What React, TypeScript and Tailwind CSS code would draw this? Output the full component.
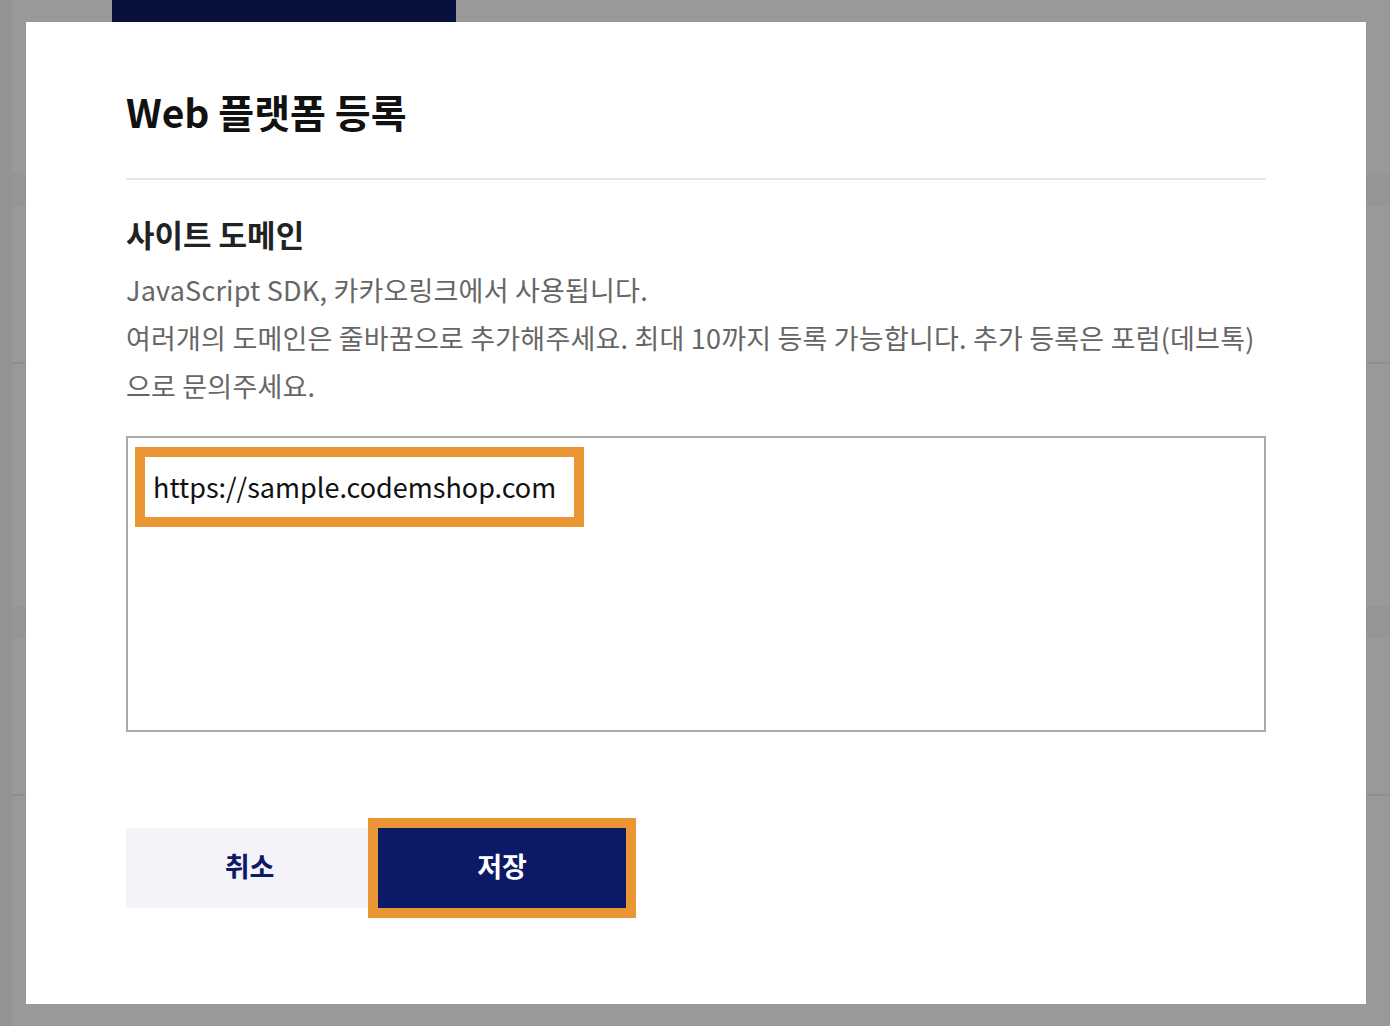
export default function App() {
  return (
    <div className="relative h-[1026px] w-[1390px] overflow-hidden bg-[#999999] font-['Noto_Sans_CJK_KR',sans-serif]">
      {/* page behind the dimmed overlay */}
      <div className="flex h-full">
        <div className="w-[12px] bg-[#939393]" />
        <div className="flex flex-1 flex-col">
          <div className="ml-[100px] h-[22px] w-[344px] bg-[#08103d]" />
          <div className="h-[151px]" />
          <div className="h-[33px] bg-[#959595]" />
          <div className="h-[156px]" />
          <div className="h-[2px] bg-[#8f8f8f]" />
          <div className="h-[242px]" />
          <div className="h-[32px] bg-[#959595]" />
          <div className="h-[156px]" />
          <div className="h-[2px] bg-[#8f8f8f]" />
        </div>
      </div>

      {/* modal */}
      <div className="absolute left-[26px] top-[22px] h-[982px] w-[1340px] bg-white px-[100px] pt-[67px]">
        <h2 className="text-[39px] font-bold leading-[44px] text-[#111111]">Web 플랫폼 등록</h2>
        <div className="mt-[45px] h-[2px] bg-[#e6e6e6]" />

        <h3 className="mt-[34px] text-[31px] font-bold leading-[40px] text-[#222222]">사이트 도메인</h3>
        <div className="mt-[12px] text-[27px] leading-[48px] tracking-[0.2px] text-[#666666]">
          <p>JavaScript SDK, 카카오링크에서 사용됩니다.</p>
          <p className="whitespace-nowrap">여러개의 도메인은 줄바꿈으로 추가해주세요. 최대 10까지 등록 가능합니다. 추가 등록은 포럼(데브톡)</p>
          <p>으로 문의주세요.</p>
        </div>

        <div className="mt-[26px] h-[296px] border-2 border-[#aaaaaa] px-[7px] pt-[9px]">
          <div className="inline-flex h-[80px] items-center border-[10px] border-[#ea9634] pl-[8px] pr-[18px] text-[27px] text-[#111111]">
            https://sample.codemshop.com
          </div>
        </div>

        <div className="mt-[86px] flex items-center">
          <button className="flex h-[80px] w-[242px] items-center justify-center bg-[#f3f3f9] pb-[3px] pl-[5px] text-[27px] font-bold text-[#0d1966]">
            취소
          </button>
          <div className="border-[10px] border-[#ea9634]">
            <button className="flex h-[80px] w-[248px] items-center justify-center bg-[#0c1966] pb-[3px] text-[27px] font-bold text-white">
              저장
            </button>
          </div>
        </div>
      </div>
    </div>
  );
}
